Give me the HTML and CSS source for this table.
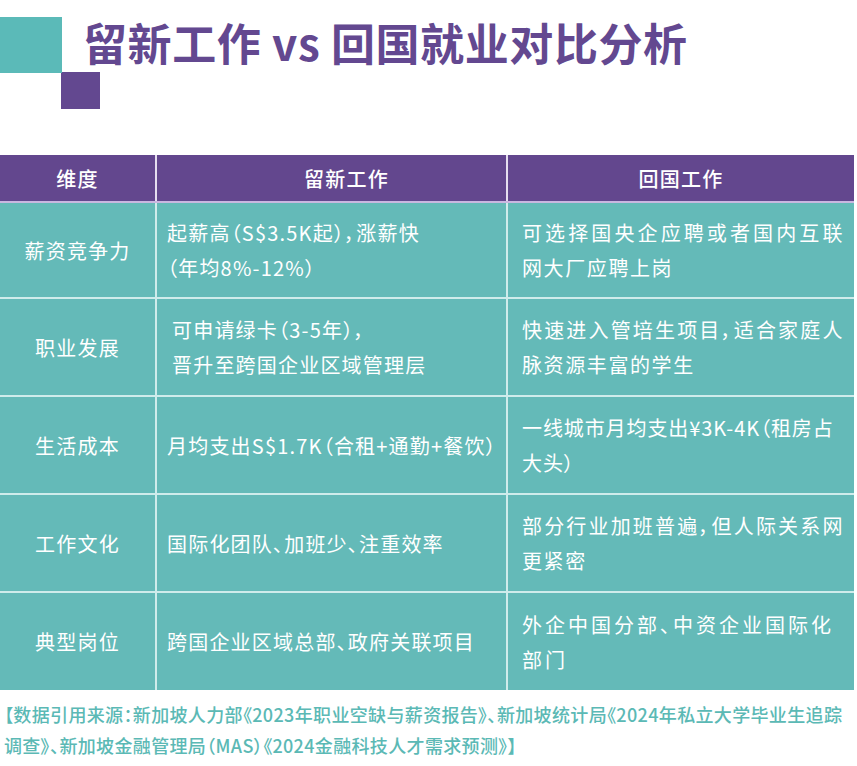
FILE: index.html
```html
<!DOCTYPE html>
<html lang="zh-CN">
<head>
<meta charset="utf-8">
<link rel="stylesheet" href="styles.css">
</head>
<body>
<header class="hero">
  <div class="hero-row">
    <div class="sq-teal"></div>
    <h1 class="title">留新工作 vs 回国就业对比分析</h1>
  </div>
  <div class="sq-purple"></div>
</header>

<table class="cmp">
  <colgroup>
    <col class="c1"><col class="c2"><col class="c3">
  </colgroup>
  <thead>
    <tr>
      <th>维度</th>
      <th class="h2">留新工作</th>
      <th>回国工作</th>
    </tr>
  </thead>
  <tbody>
    <tr>
      <td class="dim">薪资竞争力</td>
      <td class="sg">起薪高（S$3.5K起），涨薪快<br>（年均8%-12%）</td>
      <td class="cn">可选择国央企应聘或者国内互联网大厂应聘上岗</td>
    </tr>
    <tr>
      <td class="dim">职业发展</td>
      <td class="sg"><span class="ind">可申请绿卡（3-5年），<br>晋升至跨国企业区域管理层</span></td>
      <td class="cn">快速进入管培生项目，适合家庭人脉资源丰富的学生</td>
    </tr>
    <tr>
      <td class="dim">生活成本</td>
      <td class="sg">月均支出S$1.7K（合租+通勤+餐饮）</td>
      <td class="cn tight">一线城市月均支出¥3K-4K（租房占<br>大头）</td>
    </tr>
    <tr>
      <td class="dim">工作文化</td>
      <td class="sg">国际化团队、加班少、注重效率</td>
      <td class="cn">部分行业加班普遍，但人际关系网更紧密</td>
    </tr>
    <tr>
      <td class="dim">典型岗位</td>
      <td class="sg">跨国企业区域总部、政府关联项目</td>
      <td class="cn wide">外企中国分部、中资企业国际化<br>部门</td>
    </tr>
  </tbody>
</table>

<p class="source">【数据引用来源：新加坡人力部《2023年职业空缺与薪资报告》、新加坡统计局《2024年私立大学毕业生追踪调查》、新加坡金融管理局（MAS）《2024金融科技人才需求预测》】</p>
</body>
</html>
```

FILE: styles.css
```css
html, body {
  margin: 0;
  padding: 0;
  background: #ffffff;
}
body {
  width: 857px;
  font-family: "Noto Sans CJK SC", "Noto Sans", sans-serif;
  font-feature-settings: "palt" 1;
}
.hero {
  padding-top: 17px;
  height: 155px;
  box-sizing: border-box;
}
.hero-row {
  display: flex;
  align-items: center;
}
.sq-teal {
  width: 62px;
  height: 56px;
  background: #5bbab8;
  flex: none;
}
.title {
  margin: 0 0 0 21px;
  font-size: 44px;
  line-height: 56px;
  font-weight: 700;
  color: #634890;
  letter-spacing: 0.6px;
  position: relative;
  top: -3px;
  font-feature-settings: normal;
}
.sq-purple {
  width: 39px;
  height: 37px;
  margin-left: 61px;
  margin-top: -1px;
  background: #634890;
}

.cmp {
  border-collapse: collapse;
  table-layout: fixed;
  width: 854px;
  margin-left: 0;
  color: #ffffff;
  font-size: 20px;
  letter-spacing: 1.2px;
}
.c1 { width: 156px; }
.c2 { width: 351px; }
.c3 { width: 347px; }

.cmp th {
  background: #63478e;
  height: 46px;
  padding: 0;
  font-weight: 500;
  text-align: center;
  border-left: 2px solid #e6def0;
  border-bottom: 2px solid #c9b7e0;
}
.cmp th:first-child { border-left: none; }
.cmp th.h2 { padding-left: 30px; }

.cmp td {
  background: #64bab8;
  height: 96px;
  padding: 0;
  line-height: 35px;
  vertical-align: middle;
  border-left: 2px solid #cfeceb;
  border-top: 2px solid #cfeceb;
  box-sizing: border-box;
}
.cmp tbody tr:first-child td { border-top: none; }
.cmp td:first-child { border-left: none; }
.cmp tbody tr:first-child td { height: 96px; }
.cmp tbody tr + tr td { height: 98px; }

.dim { text-align: center; }
.sg { padding: 0 1px 0 10px !important; }
.ind { display: block; padding-left: 5px; }
.cn {
  padding: 0 10px 0 14px !important;
  letter-spacing: 1.6px;
  text-align: justify;
}
.cn.wide { letter-spacing: 3px; }
.cn.tight { letter-spacing: 0.9px; padding-right: 6px !important; }

.source {
  margin: 9px 0 0 0;
  padding-left: 4px;
  font-size: 18px;
  line-height: 31px;
  font-weight: 500;
  color: #5bb9b5;
  letter-spacing: 0.35px;
}
```
